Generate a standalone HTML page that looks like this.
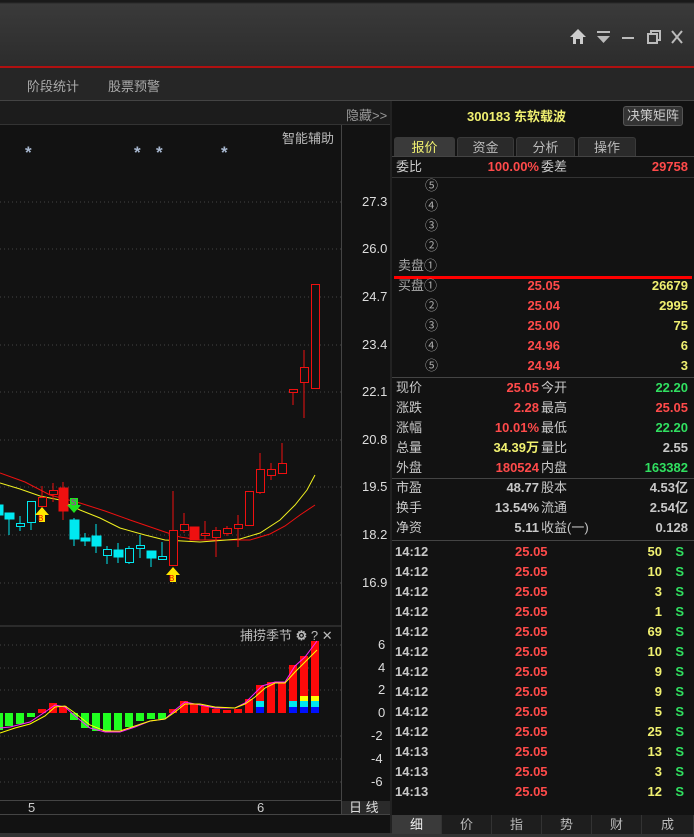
<!DOCTYPE html>
<html><head><meta charset="utf-8"><style>
*{margin:0;padding:0;box-sizing:border-box}
body{width:694px;height:837px;background:#121212;overflow:hidden;position:relative;font-family:"Liberation Sans","Noto Sans CJK SC",sans-serif;font-size:13px;color:#c8c8c8}
.a{position:absolute;white-space:nowrap}
.r{color:#ff4a4a}.y{color:#f0f070}.g{color:#30e060}.w{color:#c8c8c8}
.row{position:absolute;left:392px;width:302px;height:20px;line-height:20px}
.row span{position:absolute}
.c{color:#aaa}
.tab{position:absolute;top:137px;height:19px;line-height:19px;text-align:center;background:#2a2a2a;border:1px solid #3a3a3a;border-bottom:none;color:#bbb;border-radius:3px 3px 0 0}
.bt{position:absolute;top:815px;height:19px;line-height:19px;text-align:center;background:#1e1e1e;color:#bbb;border-right:1px solid #333}
</style></head><body>
<div class="a" style="left:0;top:0;width:694px;height:66px;background:linear-gradient(#1a1a1a 0,#1a1a1a 2px,#3a3a3a 4px,#2c2c2c 66px)"></div>
<div class="a" style="left:0;top:66px;width:694px;height:2px;background:#b01010"></div>
<div class="a" style="left:0;top:68px;width:694px;height:32px;background:#262626"></div>
<div class="a" style="left:27px;top:76px;color:#aaa">阶段统计</div>
<div class="a" style="left:108px;top:76px;color:#aaa">股票预警</div>
<svg class="a" style="left:568px;top:28px" width="126" height="20">
<path d="M2 9 L10 1 L18 9 L15 9 L15 16 L12 16 L12 11 L8 11 L8 16 L5 16 L5 9Z" fill="#ccc"/>
<rect x="29" y="3" width="13" height="2" fill="#bbb"/><path d="M29 8 L42 8 L35.5 15Z" fill="#bbb"/>
<rect x="54" y="9" width="12" height="2" fill="#bbb"/>
<rect x="80" y="6" width="9" height="9" fill="none" stroke="#bbb" stroke-width="2"/><path d="M83 5 L83 3 L92 3 L92 12 L90 12" fill="none" stroke="#bbb" stroke-width="2"/>
<path d="M104 3 L114 15 M114 3 L104 15" stroke="#bbb" stroke-width="2"/>
</svg>
<div class="a" style="left:0;top:100px;width:694px;height:1px;background:#444"></div>
<div class="a" style="left:0;top:101px;width:390px;height:24px;background:#1c1c1c;border-bottom:1px solid #333"></div>
<div class="a" style="left:346px;top:105px;color:#999">隐藏&gt;&gt;</div>
<div class="a" style="left:390px;top:101px;width:2px;height:736px;background:#222"></div>
<div class="a" style="left:341px;top:125px;width:1px;height:690px;background:#444"></div>
<div class="a" style="left:282px;top:128px;color:#bbb">智能辅助</div>
<svg class="a" style="left:0;top:125px" width="341" height="690">
<g stroke="#444" stroke-dasharray="1 3">
<line x1="0" x2="341" y1="77" y2="77"/><line x1="0" x2="341" y1="124" y2="124"/><line x1="0" x2="341" y1="172" y2="172"/><line x1="0" x2="341" y1="220" y2="220"/><line x1="0" x2="341" y1="267" y2="267"/><line x1="0" x2="341" y1="315" y2="315"/><line x1="0" x2="341" y1="362" y2="362"/><line x1="0" x2="341" y1="410" y2="410"/><line x1="0" x2="341" y1="458" y2="458"/>
<line x1="0" x2="341" y1="520" y2="520"/><line x1="0" x2="341" y1="543" y2="543"/><line x1="0" x2="341" y1="565" y2="565"/><line x1="0" x2="341" y1="611" y2="611"/><line x1="0" x2="341" y1="634" y2="634"/><line x1="0" x2="341" y1="657" y2="657"/>
</g>
<g fill="#a8b8d0" font-size="17" font-weight="bold"><text x="25" y="33">*</text><text x="134" y="33">*</text><text x="156" y="33">*</text><text x="221" y="33">*</text></g>
<line x1="0" x2="341" y1="501" y2="501" stroke="#444"/>
</svg>
<svg class="a" style="left:0;top:0" width="341" height="815">
<polyline fill="none" stroke="#ee1010" points="0,473 25,482 50,495 80,503 105,511 130,520 165,532 180,537 200,540 250,540 270,534 285,526 300,515 315,505"/>
<polyline fill="none" stroke="#f0f020" points="0,483 20,489 40,496 60,500 80,510 100,518 120,528 145,535 165,540 200,542 240,539 260,533 280,520 295,505 307,490 315,475"/>
<g stroke="#00e8f0" fill="#00e8f0">
<rect x="0" y="505" width="3" height="10"/><line x1="9" x2="9" y1="513" y2="535"/><rect x="5" y="513" width="9" height="6"/>
<line x1="20" x2="20" y1="516" y2="531"/><rect x="16.5" y="523.5" width="8" height="3" fill="#121212"/>
<line x1="31" x2="31" y1="501" y2="530"/><rect x="27.5" y="501.5" width="8" height="21" fill="#121212"/>
<line x1="74" x2="74" y1="518" y2="546"/><rect x="70" y="520" width="9" height="19"/>
<line x1="85" x2="85" y1="533" y2="546"/><rect x="81" y="538" width="9" height="3"/>
<line x1="96" x2="96" y1="524" y2="553"/><rect x="92" y="536" width="9" height="10"/>
<line x1="107" x2="107" y1="546" y2="564"/><rect x="103.5" y="549.5" width="8" height="6" fill="#121212"/>
<line x1="118" x2="118" y1="543" y2="563"/><rect x="114" y="550" width="9" height="7"/>
<line x1="129" x2="129" y1="546" y2="564"/><rect x="125.5" y="548.5" width="8" height="14" fill="#121212"/>
<line x1="140" x2="140" y1="535" y2="558"/><rect x="136.5" y="545.5" width="8" height="3" fill="#121212"/>
<line x1="151" x2="151" y1="551" y2="567"/><rect x="147" y="551" width="9" height="7"/>
<line x1="162" x2="162" y1="542" y2="556"/><rect x="158.5" y="556.5" width="8" height="3" fill="#121212"/>
</g>
<g stroke="#ee1010" fill="#121212">
<line x1="42" x2="42" y1="486" y2="497"/><rect x="38.5" y="497.5" width="8" height="9"/>
<line x1="53" x2="53" y1="483" y2="502"/><rect x="49.5" y="490.5" width="8" height="4"/>
<line x1="63" x2="63" y1="482" y2="520"/><rect x="59" y="488" width="9" height="23" fill="#ee1010"/>
<line x1="173" x2="173" y1="491" y2="530"/><rect x="169.5" y="530.5" width="8" height="35"/>
<line x1="184" x2="184" y1="513" y2="533"/><rect x="180.5" y="524.5" width="8" height="6"/>
<rect x="190" y="527" width="9" height="13" fill="#ee1010"/>
<line x1="205" x2="205" y1="521" y2="540"/><rect x="201.5" y="533.5" width="8" height="2"/>
<line x1="216" x2="216" y1="527" y2="557"/><rect x="212.5" y="530.5" width="8" height="7"/>
<line x1="227" x2="227" y1="526" y2="536"/><rect x="223.5" y="528.5" width="8" height="5"/>
<line x1="238" x2="238" y1="515" y2="547"/><rect x="234.5" y="524.5" width="8" height="4"/>
<rect x="245.5" y="491.5" width="8" height="34"/>
<line x1="260" x2="260" y1="453" y2="494"/><rect x="256.5" y="469.5" width="8" height="23"/>
<line x1="271" x2="271" y1="463" y2="480"/><rect x="267.5" y="469.5" width="8" height="6"/>
<line x1="282" x2="282" y1="443" y2="463"/><rect x="278.5" y="463.5" width="8" height="10"/>
<line x1="293" x2="293" y1="392" y2="405"/><rect x="289.5" y="389.5" width="8" height="3"/>
<line x1="304" x2="304" y1="350" y2="418"/><rect x="300.5" y="367.5" width="8" height="15"/>
<rect x="311.5" y="284.5" width="8" height="104"/>
</g>
<g><path d="M35 515 L42 507 L49 515 L45 515 L45 522 L39 522 L39 515Z" fill="#ffe800"/><text x="38" y="521" font-size="8" fill="#e00">B</text>
<path d="M166 575 L173 567 L180 575 L176 575 L176 582 L170 582 L170 575Z" fill="#ffe800"/><text x="169" y="581" font-size="8" fill="#e00">B</text>
<path d="M70 498 L78 498 L78 505 L81 505 L74 513 L67 505 L70 505Z" fill="#20e020"/><text x="71" y="505" font-size="8" fill="#c0c">S</text></g>
<g fill="#20ff20">
<rect x="0" y="713" width="3" height="17"/><rect x="5" y="713" width="8" height="13"/><rect x="16" y="713" width="8" height="11"/><rect x="27" y="713" width="8" height="4"/>
<rect x="70" y="713" width="8" height="7"/><rect x="81" y="713" width="8" height="15"/><rect x="92" y="713" width="8" height="18"/><rect x="103" y="713" width="8" height="18"/><rect x="114" y="713" width="8" height="17"/><rect x="125" y="713" width="8" height="14"/><rect x="136" y="713" width="8" height="8"/><rect x="147" y="713" width="8" height="6"/><rect x="158" y="713" width="8" height="6"/></g>
<g fill="#ff0a0a">
<rect x="38" y="709" width="8" height="4"/><rect x="49" y="703" width="8" height="10"/><rect x="59" y="706" width="8" height="7"/>
<rect x="169" y="709" width="8" height="4"/><rect x="180" y="701" width="8" height="12"/><rect x="190" y="704" width="8" height="9"/><rect x="201" y="706" width="8" height="7"/><rect x="212" y="709" width="8" height="4"/><rect x="223" y="710" width="8" height="3"/><rect x="234" y="709" width="8" height="4"/><rect x="245" y="699" width="8" height="14"/>
<rect x="256" y="685" width="8" height="28"/><rect x="267" y="682" width="8" height="31"/><rect x="278" y="682" width="8" height="31"/><rect x="289" y="665" width="8" height="48"/><rect x="300" y="656" width="8" height="57"/><rect x="311" y="641" width="8" height="72"/></g>
<g fill="#00e8f0"><rect x="256" y="701" width="8" height="6"/><rect x="289" y="701" width="8" height="6"/><rect x="300" y="701" width="8" height="6"/><rect x="311" y="701" width="8" height="6"/></g>
<g fill="#0010ff"><rect x="256" y="707" width="8" height="6"/><rect x="289" y="707" width="8" height="6"/><rect x="300" y="707" width="8" height="6"/><rect x="311" y="707" width="8" height="6"/></g>
<g fill="#ffff00"><rect x="300" y="696" width="8" height="5"/><rect x="311" y="696" width="8" height="5"/></g>
<polyline fill="none" stroke="#ff20ff" points="0,728 10,727 30,722 45,712 55,705 65,707 75,716 90,728 105,732 120,732 135,727 150,721 165,719 175,710 185,702 200,705 215,708 235,708 245,703 255,693 262,686 275,682 285,682 295,666 305,657 317,641"/>
<polyline fill="none" stroke="#ffff00" points="0,733 15,728 30,724 45,716 55,707 65,706 75,713 90,725 105,731 120,731 135,726 150,721 165,719 175,712 185,704 200,704 215,707 235,708 245,704 255,697 265,688 275,683 285,683 295,672 305,662 317,650"/>
</svg>
<div class="a" style="left:240px;top:625px;color:#bbb">捕捞季节 <b style="color:#bbb">⚙</b> ? ✕</div>
<div class="a" style="left:0;top:800px;width:341px;height:1px;background:#444"></div>
<div class="a" style="left:0;top:814px;width:390px;height:1px;background:#444"></div>
<div class="a" style="left:28px;top:800px;color:#ccc">5</div>
<div class="a" style="left:257px;top:800px;color:#ccc">6</div>
<div class="a" style="left:342px;top:801px;width:48px;height:13px;background:#2a2a2a;color:#ddd;line-height:13px;padding-left:7px">日 线</div>
<div class="a" style="left:0;top:833px;width:694px;height:4px;background:#333"></div>
<div style="font-size:13px;color:#ddd">
<div class="a" style="left:362px;top:194px">27.3</div><div class="a" style="left:362px;top:241px">26.0</div><div class="a" style="left:362px;top:289px">24.7</div><div class="a" style="left:362px;top:337px">23.4</div><div class="a" style="left:362px;top:384px">22.1</div><div class="a" style="left:362px;top:432px">20.8</div><div class="a" style="left:362px;top:479px">19.5</div><div class="a" style="left:362px;top:527px">18.2</div><div class="a" style="left:362px;top:575px">16.9</div>
<div class="a" style="left:378px;top:637px">6</div><div class="a" style="left:378px;top:660px">4</div><div class="a" style="left:378px;top:682px">2</div><div class="a" style="left:378px;top:705px">0</div><div class="a" style="left:371px;top:728px">-2</div><div class="a" style="left:371px;top:751px">-4</div><div class="a" style="left:371px;top:774px">-6</div>
</div>
<div class="a" style="left:392px;top:101px;width:302px;height:714px;background:#121212"></div>
<div class="a" style="left:467px;top:106px;color:#f0f070;font-weight:bold">300183 东软载波</div>
<div class="a" style="left:623px;top:106px;width:60px;height:20px;background:#333;border:1px solid #555;border-radius:3px;color:#ccc;text-align:center;line-height:18px">决策矩阵</div>
<div class="tab" style="left:394px;width:61px;background:#3a3a3a;color:#f0f070">报价</div>
<div class="tab" style="left:457px;width:57px">资金</div>
<div class="tab" style="left:516px;width:59px">分析</div>
<div class="tab" style="left:578px;width:58px">操作</div>
<div class="a" style="left:392px;top:156px;width:302px;height:1px;background:#444"></div>
<div style="font-weight:bold;font-size:13px">
<div class="row" style="top:157px"><span style="left:4px;font-weight:normal">委比</span><span class="r" style="right:155px">100.00%</span><span style="left:149px;font-weight:normal">委差</span><span class="r" style="right:6px">29758</span></div>
<div class="a" style="left:392px;top:177px;width:302px;height:1px;background:#333"></div>
<div class="row c" style="top:176px;font-weight:normal"><span style="left:33px">⑤</span></div>
<div class="row c" style="top:196px;font-weight:normal"><span style="left:33px">④</span></div>
<div class="row c" style="top:216px;font-weight:normal"><span style="left:33px">③</span></div>
<div class="row c" style="top:236px;font-weight:normal"><span style="left:33px">②</span></div>
<div class="row c" style="top:256px;font-weight:normal"><span style="left:6px">卖盘①</span></div>
<div class="a" style="left:394px;top:276px;width:298px;height:3px;background:#ff0000"></div>
<div class="row" style="top:276px"><span class="c" style="left:6px;font-weight:normal">买盘①</span><span class="r" style="right:134px">25.05</span><span class="y" style="right:6px">26679</span></div>
<div class="row" style="top:296px"><span class="c" style="left:33px;font-weight:normal">②</span><span class="r" style="right:134px">25.04</span><span class="y" style="right:6px">2995</span></div>
<div class="row" style="top:316px"><span class="c" style="left:33px;font-weight:normal">③</span><span class="r" style="right:134px">25.00</span><span class="y" style="right:6px">75</span></div>
<div class="row" style="top:336px"><span class="c" style="left:33px;font-weight:normal">④</span><span class="r" style="right:134px">24.96</span><span class="y" style="right:6px">6</span></div>
<div class="row" style="top:356px"><span class="c" style="left:33px;font-weight:normal">⑤</span><span class="r" style="right:134px">24.94</span><span class="y" style="right:6px">3</span></div>
<div class="a" style="left:392px;top:377px;width:302px;height:1px;background:#444"></div>
<div class="row" style="top:378px"><span style="left:4px;font-weight:normal">现价</span><span class="r" style="right:155px">25.05</span><span style="left:149px;font-weight:normal">今开</span><span class="g" style="right:6px">22.20</span></div>
<div class="row" style="top:398px"><span style="left:4px;font-weight:normal">涨跌</span><span class="r" style="right:155px">2.28</span><span style="left:149px;font-weight:normal">最高</span><span class="r" style="right:6px">25.05</span></div>
<div class="row" style="top:418px"><span style="left:4px;font-weight:normal">涨幅</span><span class="r" style="right:155px">10.01%</span><span style="left:149px;font-weight:normal">最低</span><span class="g" style="right:6px">22.20</span></div>
<div class="row" style="top:438px"><span style="left:4px;font-weight:normal">总量</span><span class="y" style="right:155px">34.39万</span><span style="left:149px;font-weight:normal">量比</span><span style="right:6px">2.55</span></div>
<div class="row" style="top:458px"><span style="left:4px;font-weight:normal">外盘</span><span class="r" style="right:155px">180524</span><span style="left:149px;font-weight:normal">内盘</span><span class="g" style="right:6px">163382</span></div>
<div class="a" style="left:392px;top:478px;width:302px;height:1px;background:#444"></div>
<div class="row" style="top:478px"><span style="left:4px;font-weight:normal">市盈</span><span style="right:155px">48.77</span><span style="left:149px;font-weight:normal">股本</span><span style="right:6px">4.53亿</span></div>
<div class="row" style="top:498px"><span style="left:4px;font-weight:normal">换手</span><span style="right:155px">13.54%</span><span style="left:149px;font-weight:normal">流通</span><span style="right:6px">2.54亿</span></div>
<div class="row" style="top:518px"><span style="left:4px;font-weight:normal">净资</span><span style="right:155px">5.11</span><span style="left:149px;font-weight:normal">收益(一)</span><span style="right:6px">0.128</span></div>
<div class="a" style="left:392px;top:540px;width:302px;height:1px;background:#444"></div>
<div class="row" style="top:542px"><span style="left:3px">14:12</span><span class="r" style="left:123px">25.05</span><span class="y" style="right:32px">50</span><span class="g" style="right:10px">S</span></div>
<div class="row" style="top:562px"><span style="left:3px">14:12</span><span class="r" style="left:123px">25.05</span><span class="y" style="right:32px">10</span><span class="g" style="right:10px">S</span></div>
<div class="row" style="top:582px"><span style="left:3px">14:12</span><span class="r" style="left:123px">25.05</span><span class="y" style="right:32px">3</span><span class="g" style="right:10px">S</span></div>
<div class="row" style="top:602px"><span style="left:3px">14:12</span><span class="r" style="left:123px">25.05</span><span class="y" style="right:32px">1</span><span class="g" style="right:10px">S</span></div>
<div class="row" style="top:622px"><span style="left:3px">14:12</span><span class="r" style="left:123px">25.05</span><span class="y" style="right:32px">69</span><span class="g" style="right:10px">S</span></div>
<div class="row" style="top:642px"><span style="left:3px">14:12</span><span class="r" style="left:123px">25.05</span><span class="y" style="right:32px">10</span><span class="g" style="right:10px">S</span></div>
<div class="row" style="top:662px"><span style="left:3px">14:12</span><span class="r" style="left:123px">25.05</span><span class="y" style="right:32px">9</span><span class="g" style="right:10px">S</span></div>
<div class="row" style="top:682px"><span style="left:3px">14:12</span><span class="r" style="left:123px">25.05</span><span class="y" style="right:32px">9</span><span class="g" style="right:10px">S</span></div>
<div class="row" style="top:702px"><span style="left:3px">14:12</span><span class="r" style="left:123px">25.05</span><span class="y" style="right:32px">5</span><span class="g" style="right:10px">S</span></div>
<div class="row" style="top:722px"><span style="left:3px">14:12</span><span class="r" style="left:123px">25.05</span><span class="y" style="right:32px">25</span><span class="g" style="right:10px">S</span></div>
<div class="row" style="top:742px"><span style="left:3px">14:13</span><span class="r" style="left:123px">25.05</span><span class="y" style="right:32px">13</span><span class="g" style="right:10px">S</span></div>
<div class="row" style="top:762px"><span style="left:3px">14:13</span><span class="r" style="left:123px">25.05</span><span class="y" style="right:32px">3</span><span class="g" style="right:10px">S</span></div>
<div class="row" style="top:782px"><span style="left:3px">14:13</span><span class="r" style="left:123px">25.05</span><span class="y" style="right:32px">12</span><span class="g" style="right:10px">S</span></div>
</div>
<div class="bt" style="left:392px;width:50px;background:#3a3a3a;color:#eee">细</div>
<div class="bt" style="left:442px;width:50px">价</div>
<div class="bt" style="left:492px;width:50px">指</div>
<div class="bt" style="left:542px;width:50px">势</div>
<div class="bt" style="left:592px;width:50px">财</div>
<div class="bt" style="left:642px;width:52px">成</div>
</body></html>
